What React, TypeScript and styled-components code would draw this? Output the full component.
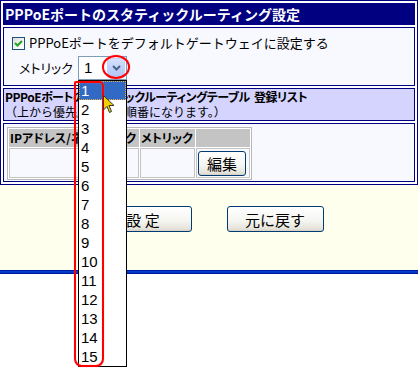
import React from "react";
import styled, { createGlobalStyle } from "styled-components";

const GlobalStyle = createGlobalStyle`
  html, body { margin: 0; padding: 0; background: #ffffff; }
  body { font-family: "Noto Sans CJK JP", "Liberation Sans", sans-serif; color: #000; }
`;

const JP = `"Noto Sans CJK JP", "Liberation Sans", sans-serif`;
const NUM = `"Liberation Sans", "DejaVu Sans", sans-serif`;

const Page = styled.div`
  width: 418px;
  min-height: 368px;
  background: #ffffff;
`;

const Panel = styled.div`
  box-sizing: border-box;
  border: 1px solid #000080;
  background: #ffffff;
  padding: 2px;
  display: flex;
  flex-direction: column;
  gap: 2px;
`;

const TitleBar = styled.div`
  height: 22px;
  background: #000080;
  color: #ffffff;
  font: bold 14px/22px ${JP};
  padding-left: 2px;
  white-space: nowrap;
`;

const Cell = styled.div<{ $h: number; $bg: string }>`
  box-sizing: border-box;
  height: ${(p) => p.$h}px;
  border: 1px solid #000080;
  background: ${(p) => p.$bg};
  display: flex;
  flex-direction: column;
`;

const CheckLine = styled.label`
  display: flex;
  align-items: center;
  gap: 4px;
  height: 14px;
  margin: 8px 0 0 8px;
  font: 13px/14px ${JP};
  white-space: nowrap;
`;

const CheckBox = styled.span`
  box-sizing: border-box;
  width: 13px;
  height: 13px;
  border: 1px solid #1c5180;
  background: linear-gradient(135deg, #dcdcd7 0%, #ffffff 80%);
  display: inline-flex;
  align-items: center;
  justify-content: center;
`;

const MetricLine = styled.div`
  display: flex;
  align-items: center;
  margin: 6px 0 0 15px;
`;

const MetricLabel = styled.span`
  width: 59px;
  font: 13px/16px ${JP};
  font-feature-settings: "palt";
  white-space: nowrap;
`;

const SelectWrap = styled.div`
  position: relative;
  width: 49px;
  height: 24px;
`;

const SelectBox = styled.div`
  box-sizing: border-box;
  width: 49px;
  height: 24px;
  border: 1px solid #7f9db9;
  background: #ffffff;
  display: flex;
  align-items: center;
  padding: 0 1px 0 5px;
  font: 15px/20px ${NUM};
`;

const DropButton = styled.span`
  box-sizing: border-box;
  margin-left: auto;
  width: 18px;
  height: 20px;
  border: 1px solid #c3d3fd;
  border-radius: 2px;
  background: linear-gradient(180deg, #d6e2fd 0%, #bccffa 60%, #b2c6f6 100%);
  display: flex;
  align-items: center;
  justify-content: center;
`;

const DropList = styled.ul`
  position: absolute;
  top: 24px;
  left: 0;
  z-index: 10;
  box-sizing: border-box;
  width: 49px;
  margin: 0;
  padding: 0;
  list-style: none;
  border: 1px solid #000000;
  background: #ffffff;
`;

const DropItem = styled.li<{ $active?: boolean }>`
  box-sizing: border-box;
  height: 19px;
  padding-left: 2px;
  font: 15px/19px ${NUM};
  color: ${(p) => (p.$active ? "#ffffff" : "#000000")};
  background: ${(p) => (p.$active ? "#316ac5" : "transparent")};
  outline: ${(p) => (p.$active ? "1px dotted #e6b24a" : "none")};
  outline-offset: -1px;
`;

const RedFrame = styled.div`
  position: absolute;
  left: -4px;
  top: 25px;
  z-index: 11;
  box-sizing: border-box;
  width: 30px;
  height: 286px;
  border: 2px solid #ff0000;
  border-radius: 2px 5px 8px 8px;
  box-shadow: 0 0 1px #ff8080, inset 0 0 1px #ff8080;
  pointer-events: none;
`;

const RedCircle = styled.div`
  position: absolute;
  left: 24px;
  top: -1px;
  z-index: 11;
  box-sizing: border-box;
  width: 28px;
  height: 24px;
  border: 2px solid #ff0000;
  border-radius: 50%;
  box-shadow: 0 0 1px #ff8080;
  pointer-events: none;
`;

const Cursor = styled.svg`
  position: absolute;
  left: 25px;
  top: 39px;
  z-index: 12;
`;

const ListHead = styled.div`
  padding: 0 1px;
  white-space: nowrap;
`;

const HeadMain = styled.div`
  font: bold 12px/16px ${JP};
  font-feature-settings: "palt";
  letter-spacing: -0.5px;
`;

const HeadSub = styled.div`
  font: 12px/14px ${JP};
`;

const TableArea = styled.div`
  padding: 3px 0 0 3px;
`;

const RouteTable = styled.table`
  border-collapse: separate;
  border-spacing: 1px;
  border: 1px solid #b8b8b8;
  background: #ffffff;
`;

const Th = styled.th<{ $w: number }>`
  box-sizing: border-box;
  width: ${(p) => p.$w}px;
  height: 18px;
  padding: 0 1px;
  background: #c4c4c4;
  text-align: left;
  font: bold 12px/18px ${JP};
  font-feature-settings: "palt";
  white-space: nowrap;
`;

const Td = styled.td`
  box-sizing: border-box;
  height: 30px;
  padding: 0 1px;
  border: 1px solid #c4c4c4;
  background: #f8f8ff;
`;

const ButtonBar = styled.div`
  height: 85px;
  box-sizing: border-box;
  padding-top: 21px;
  background: #ffffee;
  display: flex;
  justify-content: center;
  align-items: flex-start;
  gap: 35px;
`;

const XPButton = styled.button<{ $w: number; $h: number }>`
  box-sizing: border-box;
  width: ${(p) => p.$w}px;
  height: ${(p) => p.$h}px;
  padding: 0;
  border: 1px solid #003c74;
  border-radius: 3px;
  background: linear-gradient(180deg, #ffffff 0%, #f4f4f0 60%, #e6e3da 90%, #d6d0c5 100%);
  font: 15px/1 ${JP};
  color: #000;
`;

const Rule = styled.div`
  height: 4px;
  background: linear-gradient(180deg, #000080 0%, #0040d0 35%, #0038c0 70%, #000080 100%);
`;

const items = Array.from({ length: 15 }, (_, i) => i + 1);

export default function App() {
  return (
    <Page>
      <GlobalStyle />
      <Panel>
        <TitleBar>PPPoEポートのスタティックルーティング設定</TitleBar>
        <Cell $h={59} $bg="#f8f8ff">
          <CheckLine>
            <CheckBox>
              <svg width="9" height="9" viewBox="0 0 9 9">
                <path d="M1 4 L3.5 6.5 L8 2" stroke="#21a121" strokeWidth="2" fill="none" />
              </svg>
            </CheckBox>
            PPPoEポートをデフォルトゲートウェイに設定する
          </CheckLine>
          <MetricLine>
            <MetricLabel>メトリック</MetricLabel>
            <SelectWrap>
              <SelectBox>
                1
                <DropButton>
                  <svg width="9" height="6" viewBox="0 0 9 6">
                    <path d="M1 1 L4.5 4.5 L8 1" stroke="#4d6185" strokeWidth="2" fill="none" />
                  </svg>
                </DropButton>
              </SelectBox>
              <DropList>
                {items.map((n) => (
                  <DropItem key={n} $active={n === 1}>
                    {n}
                  </DropItem>
                ))}
              </DropList>
              <RedFrame />
              <RedCircle />
              <Cursor width="12" height="19" viewBox="0 0 12 19">
                <path
                  d="M0.5 0.5 L0.5 15 L4 11.5 L6.5 17.5 L8.5 16.5 L6 10.5 L11 10.5 Z"
                  fill="#f2d000"
                  stroke="#333"
                  strokeWidth="1"
                />
              </Cursor>
            </SelectWrap>
          </MetricLine>
        </Cell>
        <Cell $h={33} $bg="#d4d4ff">
          <ListHead>
            <HeadMain>PPPoEポートのスタティックルーティングテーブル&nbsp;&nbsp;登録リスト</HeadMain>
            <HeadSub>（上から優先度の高い順番になります。）</HeadSub>
          </ListHead>
        </Cell>
        <Cell $h={59} $bg="#f8f8ff">
          <TableArea>
            <RouteTable>
              <thead>
                <tr>
                  <Th $w={130}>IPアドレス/ネットマスク</Th>
                  <Th $w={55}>メトリック</Th>
                  <Th $w={54}></Th>
                </tr>
              </thead>
              <tbody>
                <tr>
                  <Td></Td>
                  <Td></Td>
                  <Td>
                    <XPButton $w={48} $h={25}>編集</XPButton>
                  </Td>
                </tr>
              </tbody>
            </RouteTable>
          </TableArea>
        </Cell>
      </Panel>
      <ButtonBar>
        <XPButton $w={97} $h={26}>設 定</XPButton>
        <XPButton $w={97} $h={26}>元に戻す</XPButton>
      </ButtonBar>
      <Rule />
    </Page>
  );
}
